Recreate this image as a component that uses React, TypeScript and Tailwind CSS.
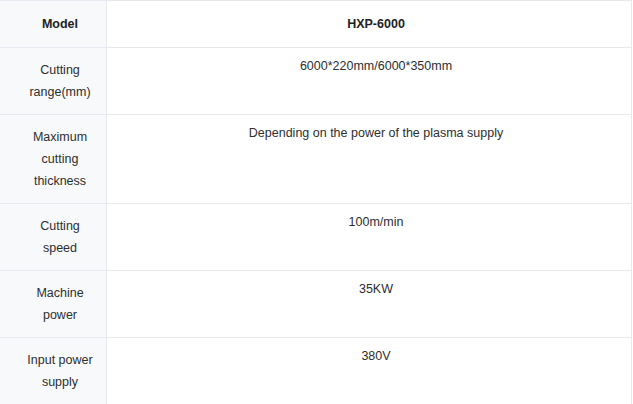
import React from 'react';

const rows: { label: string; value: string }[] = [
  { label: 'Cutting range(mm)', value: '6000*220mm/6000*350mm' },
  { label: 'Maximum cutting thickness', value: 'Depending on the power of the plasma supply' },
  { label: 'Cutting speed', value: '100m/min' },
  { label: 'Machine power', value: '35KW' },
  { label: 'Input power supply', value: '380V' },
];

const App: React.FC = () => {
  return (
    <div className="w-[633px] h-[404px] overflow-hidden bg-white font-['Liberation_Sans',Arial,sans-serif] text-[12.5px] leading-[22px] text-[#2e2e2e]">
      <div className="w-[632px] border-t border-r border-[#e6eaf0]">
        {/* header */}
        <div className="flex border-b border-[#e6eaf0] font-bold text-[#222]">
          <div className="w-[107px] shrink-0 border-r border-[#e6eaf0] bg-[#f7f9fb] pl-[24px] pr-[10px] py-3 text-center">
            Model
          </div>
          <div className="flex-1 pl-[14px] py-3 text-center">HXP-6000</div>
        </div>

        {rows.map((row) => (
          <div key={row.label} className="flex border-b border-[#e6eaf0]">
            <div className="w-[107px] shrink-0 border-r border-[#e6eaf0] bg-[#f7f9fb] pl-[24px] pr-[10px] py-[11px] text-center flex items-center justify-center">
              {row.label}
            </div>
            <div className="flex-1 pl-[14px] pt-[7px] text-center">{row.value}</div>
          </div>
        ))}
      </div>
    </div>
  );
};

export default App;
